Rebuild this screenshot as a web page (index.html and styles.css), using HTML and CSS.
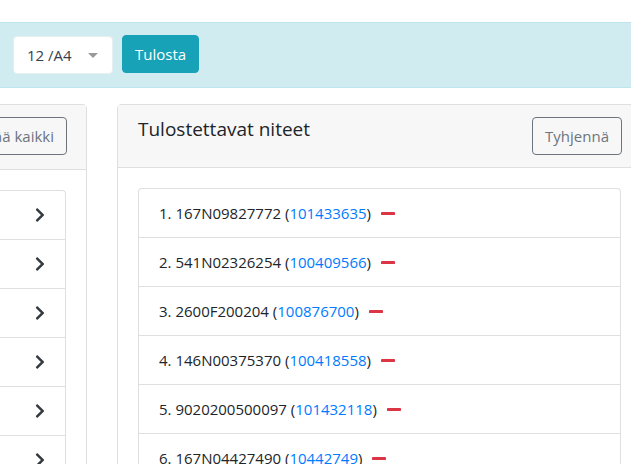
FILE: index.html
```html
<!DOCTYPE html>
<html lang="fi">
<head>
<meta charset="utf-8">
<title>Tulostus</title>
<link rel="stylesheet" href="styles.css">
</head>
<body>
<div class="topspace"></div>
<div class="band">
  <div class="select">
    <span class="select-text">12 /A4</span>
    <span class="caret"></span>
  </div>
  <button class="btn btn-info">Tulosta</button>
</div>
<div class="cols">
  <div class="card card-left">
    <div class="card-header header-left">
      <button class="btn btn-outline">Lisää kaikki</button>
    </div>
    <div class="card-body">
      <ul class="list-group">
        <li class="list-item item-nav"><svg class="chev" viewBox="0 0 320 512"><path d="M285.476 272.971L91.132 467.314c-9.373 9.373-24.569 9.373-33.941 0l-22.667-22.667c-9.357-9.357-9.375-24.522-.04-33.901L188.505 256 34.484 101.255c-9.335-9.379-9.317-24.544.04-33.901l22.667-22.667c9.373-9.373 24.569-9.373 33.941 0L285.475 239.03c9.373 9.372 9.373 24.568.001 33.941z"/></svg></li>
        <li class="list-item item-nav"><svg class="chev" viewBox="0 0 320 512"><path d="M285.476 272.971L91.132 467.314c-9.373 9.373-24.569 9.373-33.941 0l-22.667-22.667c-9.357-9.357-9.375-24.522-.04-33.901L188.505 256 34.484 101.255c-9.335-9.379-9.317-24.544.04-33.901l22.667-22.667c9.373-9.373 24.569-9.373 33.941 0L285.475 239.03c9.373 9.372 9.373 24.568.001 33.941z"/></svg></li>
        <li class="list-item item-nav"><svg class="chev" viewBox="0 0 320 512"><path d="M285.476 272.971L91.132 467.314c-9.373 9.373-24.569 9.373-33.941 0l-22.667-22.667c-9.357-9.357-9.375-24.522-.04-33.901L188.505 256 34.484 101.255c-9.335-9.379-9.317-24.544.04-33.901l22.667-22.667c9.373-9.373 24.569-9.373 33.941 0L285.475 239.03c9.373 9.372 9.373 24.568.001 33.941z"/></svg></li>
        <li class="list-item item-nav"><svg class="chev" viewBox="0 0 320 512"><path d="M285.476 272.971L91.132 467.314c-9.373 9.373-24.569 9.373-33.941 0l-22.667-22.667c-9.357-9.357-9.375-24.522-.04-33.901L188.505 256 34.484 101.255c-9.335-9.379-9.317-24.544.04-33.901l22.667-22.667c9.373-9.373 24.569-9.373 33.941 0L285.475 239.03c9.373 9.372 9.373 24.568.001 33.941z"/></svg></li>
        <li class="list-item item-nav"><svg class="chev" viewBox="0 0 320 512"><path d="M285.476 272.971L91.132 467.314c-9.373 9.373-24.569 9.373-33.941 0l-22.667-22.667c-9.357-9.357-9.375-24.522-.04-33.901L188.505 256 34.484 101.255c-9.335-9.379-9.317-24.544.04-33.901l22.667-22.667c9.373-9.373 24.569-9.373 33.941 0L285.475 239.03c9.373 9.372 9.373 24.568.001 33.941z"/></svg></li>
        <li class="list-item item-nav"><svg class="chev" viewBox="0 0 320 512"><path d="M285.476 272.971L91.132 467.314c-9.373 9.373-24.569 9.373-33.941 0l-22.667-22.667c-9.357-9.357-9.375-24.522-.04-33.901L188.505 256 34.484 101.255c-9.335-9.379-9.317-24.544.04-33.901l22.667-22.667c9.373-9.373 24.569-9.373 33.941 0L285.475 239.03c9.373 9.372 9.373 24.568.001 33.941z"/></svg></li>
      </ul>
    </div>
  </div>
  <div class="card card-right">
    <div class="card-header header-right">
      <h5 class="card-title">Tulostettavat niteet</h5>
      <button class="btn btn-outline">Tyhjennä</button>
    </div>
    <div class="card-body">
      <ul class="list-group">
        <li class="list-item">1. 167N09827772 (<a href="#">101433635</a>)<svg class="minus" viewBox="0 0 448 96"><rect x="0" y="0" width="448" height="96" rx="28"/></svg></li>
        <li class="list-item">2. 541N02326254 (<a href="#">100409566</a>)<svg class="minus" viewBox="0 0 448 96"><rect x="0" y="0" width="448" height="96" rx="28"/></svg></li>
        <li class="list-item">3. 2600F200204 (<a href="#">100876700</a>)<svg class="minus" viewBox="0 0 448 96"><rect x="0" y="0" width="448" height="96" rx="28"/></svg></li>
        <li class="list-item">4. 146N00375370 (<a href="#">100418558</a>)<svg class="minus" viewBox="0 0 448 96"><rect x="0" y="0" width="448" height="96" rx="28"/></svg></li>
        <li class="list-item">5. 9020200500097 (<a href="#">101432118</a>)<svg class="minus" viewBox="0 0 448 96"><rect x="0" y="0" width="448" height="96" rx="28"/></svg></li>
        <li class="list-item">6. 167N04427490 (<a href="#">10442749</a>)<svg class="minus" viewBox="0 0 448 96"><rect x="0" y="0" width="448" height="96" rx="28"/></svg></li>
      </ul>
    </div>
  </div>
</div>
</body>
</html>
```
FILE: styles.css
```css
html, body {
  margin: 0;
  padding: 0;
}
body {
  width: 631px;
  height: 464px;
  overflow: hidden;
  background: #fff;
  font-family: "Open Sans", "Noto Sans", sans-serif;
  font-size: 15px;
  color: #212529;
}
.topspace {
  height: 22px;
}
.band {
  box-sizing: border-box;
  height: 66px;
  background: #d1ecf1;
  border-top: 1px solid #bee5eb;
  border-bottom: 1px solid #bee5eb;
  display: flex;
  align-items: center;
  padding-left: 13px;
  gap: 9px;
}
.select {
  box-sizing: border-box;
  width: 100px;
  height: 38px;
  background: #fff;
  border: 1px solid #e6eef0;
  border-radius: 4px;
  display: flex;
  align-items: center;
  padding-left: 13px;
  padding-right: 14px;
  justify-content: space-between;
}
.select-text {
  color: #36404e;
  font-size: 15px;
}
.caret {
  width: 0;
  height: 0;
  border-style: solid;
  border-width: 5px 5px 0 5px;
  border-color: #999 transparent transparent transparent;
}
.btn {
  box-sizing: border-box;
  height: 38px;
  padding: 0 12px;
  border-radius: 4px;
  font-family: inherit;
  font-size: 15px;
  line-height: 1;
  cursor: pointer;
}
.btn-info {
  background: #17a2b8;
  border: 1px solid #17a2b8;
  color: #fff;
  margin-top: -2px;
}
.btn-outline {
  background: transparent;
  border: 1px solid #6c757d;
  color: #6c757d;
}
.cols {
  display: flex;
  gap: 30px;
  margin-top: 16px;
  margin-left: -213px;
  align-items: flex-start;
}
.card {
  box-sizing: border-box;
  border: 1px solid #dfdfdf;
  border-radius: 4px;
  background: #fff;
  flex-shrink: 0;
}
.card-left {
  width: 300px;
}
.card-right {
  width: 525px;
}
.card-header {
  background: #f7f7f7;
  border-bottom: 1px solid #dfdfdf;
  display: flex;
  padding: 12px 19px 12px 20px;
}
.header-left {
  justify-content: flex-end;
  padding-bottom: 14px;
}
.header-right {
  justify-content: space-between;
  align-items: flex-start;
}
.card-title {
  margin: 0;
  font-size: 19px;
  font-weight: 400;
  line-height: 24px;
  color: #212529;
}
.card-body {
  padding: 20px;
}
.list-group {
  list-style: none;
  margin: 0;
  padding: 0;
  border: 1px solid #dfdfdf;
  border-radius: 4px;
  border-bottom: none;
}
.list-item {
  box-sizing: border-box;
  height: 49px;
  border-bottom: 1px solid #dfdfdf;
  display: flex;
  align-items: center;
  padding: 0 20px;
  white-space: pre;
}
.item-nav {
  justify-content: flex-end;
}
.chev {
  width: 10px;
  height: 16px;
  fill: #343a40;
}
.list-item a {
  color: #007bff;
  text-decoration: none;
}
.minus {
  width: 14px;
  height: 3px;
  fill: #dc3545;
  margin-left: 10px;
}
```
